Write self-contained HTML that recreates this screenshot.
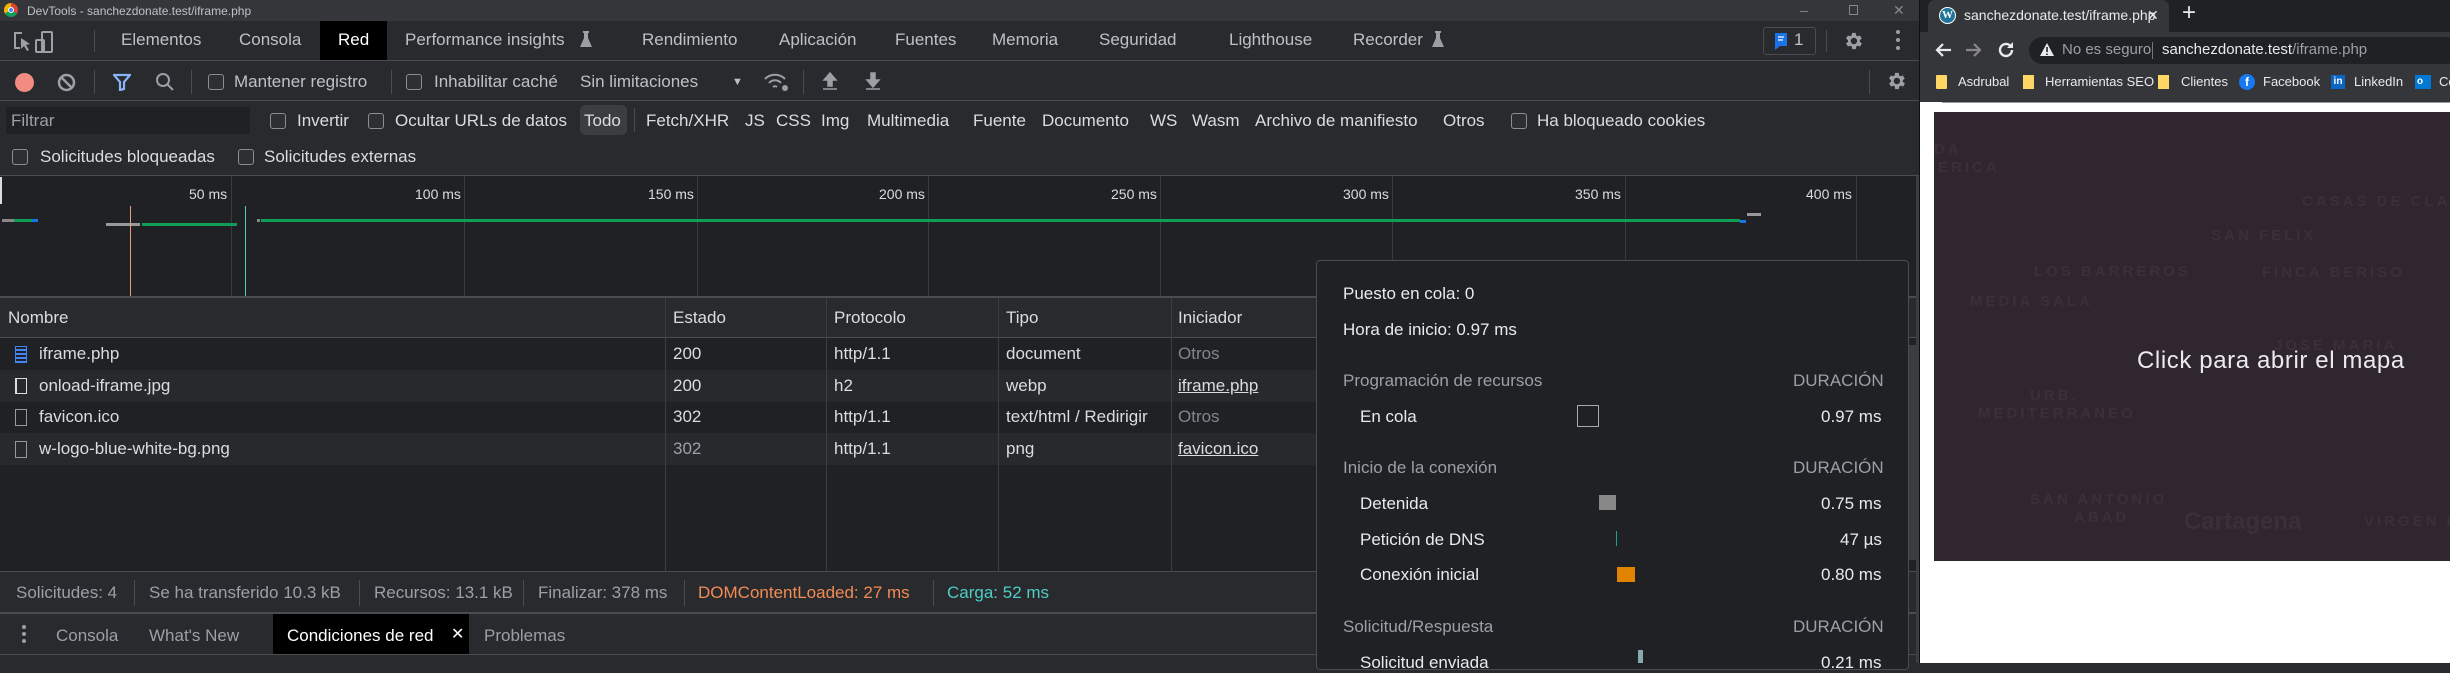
<!DOCTYPE html>
<html><head><meta charset="utf-8"><style>
*{margin:0;padding:0;box-sizing:border-box}
body{width:2450px;height:663px;overflow:hidden;background:#292a2d;font-family:"Liberation Sans",sans-serif;font-size:17px;color:#bdc1c6;position:relative}
.a{position:absolute;white-space:nowrap}
.hl{position:absolute;height:1px;background:#4a4c50}
.vl{position:absolute;width:1px;background:#4a4c50}
.cb{position:absolute;width:16px;height:16px;border:1.5px solid #8a8d91;border-radius:3px;background:#2e2f33}
.t{position:absolute;white-space:nowrap;line-height:20px}
</style></head><body>
<!-- title bar -->
<div class="a" style="left:0;top:0;width:1919px;height:21px;background:#35363a"></div>
<div class="a" style="left:4px;top:3px;width:14px;height:14px;border-radius:50%;background:conic-gradient(#db4437 0 120deg,#0f9d58 120deg 240deg,#f4b400 240deg);"></div>
<div class="a" style="left:8px;top:7px;width:6px;height:6px;border-radius:50%;background:#4285f4;border:1px solid #fff"></div>
<div class="t" style="left:27px;top:1px;font-size:12px;color:#bdc1c6">DevTools - sanchezdonate.test/iframe.php</div>
<div class="t" style="left:1800px;top:0px;font-size:14px;color:#888">–</div>
<div class="a" style="left:1849px;top:5px;width:9px;height:10px;border:1px solid #888"></div>
<div class="t" style="left:1893px;top:0px;font-size:14px;color:#888">✕</div>
<!-- tab bar -->
<div class="hl" style="left:0;top:60px;width:1919px"></div>
<svg class="a" style="left:12px;top:30px" width="42" height="24" viewBox="0 0 42 24" fill="none" stroke="#9aa0a6" stroke-width="2"><path d="M10 3H3v15h5"/><path d="M9 8l9 6-4 1 3 5-2 1-3-5-3 3z" fill="#9aa0a6" stroke="none"/><rect x="30" y="2" width="10" height="20" rx="1"/><rect x="24" y="10" width="8" height="12" rx="1"/></svg>
<div class="vl" style="left:94px;top:30px;height:22px"></div>
<div class="t" style="left:121px;top:30px">Elementos</div>
<div class="t" style="left:239px;top:30px">Consola</div>
<div class="a" style="left:320px;top:21px;width:67px;height:39px;background:#000"></div>
<div class="t" style="left:338px;top:30px;color:#fff">Red</div>
<div class="t" style="left:405px;top:30px">Performance insights</div>
<svg class="a" style="left:580px;top:31px" width="12" height="16"><path d="M3 0h6v2H8v5l4 9H0l4-9V2H3z" fill="#9aa0a6"/></svg>
<div class="t" style="left:642px;top:30px">Rendimiento</div>
<div class="t" style="left:779px;top:30px">Aplicación</div>
<div class="t" style="left:895px;top:30px">Fuentes</div>
<div class="t" style="left:992px;top:30px">Memoria</div>
<div class="t" style="left:1099px;top:30px">Seguridad</div>
<div class="t" style="left:1229px;top:30px">Lighthouse</div>
<div class="t" style="left:1353px;top:30px">Recorder</div>
<svg class="a" style="left:1432px;top:31px" width="12" height="16"><path d="M3 0h6v2H8v5l4 9H0l4-9V2H3z" fill="#9aa0a6"/></svg>
<div class="a" style="left:1763px;top:27px;width:53px;height:28px;border:1px solid #4a4c50;border-radius:3px"></div>
<svg class="a" style="left:1775px;top:33px" width="14" height="18"><path d="M0 0h12v13H5l-5 4z" fill="#1a73e8"/><path d="M3 4h6M3 7h5" stroke="#fff" stroke-width="1.3"/></svg>
<div class="t" style="left:1794px;top:30px;color:#bdc1c6">1</div>
<div class="vl" style="left:1826px;top:30px;height:22px"></div>
<svg class="a" style="left:1842px;top:30px" width="22" height="22" viewBox="0 0 24 24"><path fill="#9aa0a6" d="M19.4 13a7.5 7.5 0 0 0 0-2l2.1-1.6-2-3.5-2.5 1a7.3 7.3 0 0 0-1.7-1L15 3.2h-4l-.4 2.7a7.3 7.3 0 0 0-1.7 1l-2.5-1-2 3.5L6.6 11a7.5 7.5 0 0 0 0 2l-2.1 1.6 2 3.5 2.5-1a7.3 7.3 0 0 0 1.7 1l.4 2.7h4l.4-2.7a7.3 7.3 0 0 0 1.7-1l2.5 1 2-3.5zM13 15.5a3.5 3.5 0 1 1 0-7 3.5 3.5 0 0 1 0 7z"/></svg>
<div class="a" style="left:1896px;top:30px;width:4px;height:4px;border-radius:50%;background:#9aa0a6;box-shadow:0 8px 0 #9aa0a6,0 16px 0 #9aa0a6"></div>
<!-- toolbar -->
<div class="hl" style="left:0;top:100px;width:1919px"></div>
<div class="a" style="left:15px;top:73px;width:19px;height:19px;border-radius:50%;background:#f28b82"></div>
<svg class="a" style="left:57px;top:73px" width="19" height="19"><circle cx="9.5" cy="9.5" r="7.5" fill="none" stroke="#9aa0a6" stroke-width="2.5"/><path d="M4 4l11 11" stroke="#9aa0a6" stroke-width="2.5"/></svg>
<div class="vl" style="left:94px;top:70px;height:24px"></div>
<svg class="a" style="left:113px;top:73px" width="18" height="18"><path d="M1 2h16l-6 7v7l-4 1V9z" fill="none" stroke="#8ab4f8" stroke-width="2.2"/></svg>
<svg class="a" style="left:155px;top:72px" width="20" height="20"><circle cx="8" cy="8" r="6" fill="none" stroke="#9aa0a6" stroke-width="2"/><path d="M12 12l6 6" stroke="#9aa0a6" stroke-width="2"/></svg>
<div class="vl" style="left:191px;top:70px;height:24px"></div>
<div class="cb" style="left:208px;top:74px"></div>
<div class="t" style="left:234px;top:72px">Mantener registro</div>
<div class="vl" style="left:391px;top:70px;height:24px"></div>
<div class="cb" style="left:406px;top:74px"></div>
<div class="t" style="left:434px;top:72px">Inhabilitar caché</div>
<div class="t" style="left:580px;top:72px">Sin limitaciones</div>
<div class="t" style="left:732px;top:72px;font-size:11px">▼</div>
<svg class="a" style="left:763px;top:71px" width="28" height="22"><path d="M2 8a14 14 0 0 1 20 0M6 12a8 8 0 0 1 12 0M10 16a3 3 0 0 1 4 0" stroke="#9aa0a6" stroke-width="2" fill="none"/><circle cx="22" cy="17" r="3" fill="#9aa0a6"/></svg>
<div class="vl" style="left:803px;top:70px;height:24px"></div>
<svg class="a" style="left:822px;top:71px" width="16" height="20"><path d="M8 2L2 9h4v6h4V9h4z M1 18h14" fill="#9aa0a6" stroke="#9aa0a6" stroke-width="1.5"/></svg>
<svg class="a" style="left:865px;top:71px" width="16" height="20"><path d="M8 16l-6-7h4V2h4v7h4z M1 18h14" fill="#9aa0a6" stroke="#9aa0a6" stroke-width="1.5"/></svg>
<div class="vl" style="left:1869px;top:70px;height:24px"></div>
<svg class="a" style="left:1885px;top:70px" width="22" height="22" viewBox="0 0 24 24"><path fill="#9aa0a6" d="M19.4 13a7.5 7.5 0 0 0 0-2l2.1-1.6-2-3.5-2.5 1a7.3 7.3 0 0 0-1.7-1L15 3.2h-4l-.4 2.7a7.3 7.3 0 0 0-1.7 1l-2.5-1-2 3.5L6.6 11a7.5 7.5 0 0 0 0 2l-2.1 1.6 2 3.5 2.5-1a7.3 7.3 0 0 0 1.7 1l.4 2.7h4l.4-2.7a7.3 7.3 0 0 0 1.7-1l2.5 1 2-3.5zM13 15.5a3.5 3.5 0 1 1 0-7 3.5 3.5 0 0 1 0 7z"/></svg>
<!-- filter row -->
<div class="a" style="left:6px;top:107px;width:244px;height:27px;background:#202124"></div>
<div class="t" style="left:11px;top:111px;color:#9aa0a6">Filtrar</div>
<div class="cb" style="left:270px;top:113px"></div><div class="t" style="left:297px;top:111px;color:#dadce0">Invertir</div>
<div class="cb" style="left:368px;top:113px"></div><div class="t" style="left:395px;top:111px;color:#dadce0">Ocultar URLs de datos</div>
<div class="a" style="left:580px;top:105px;width:47px;height:30px;background:#3c3d41;border-radius:5px"></div>
<div class="t" style="left:584px;top:111px;color:#dadce0">Todo</div>
<div class="vl" style="left:634px;top:108px;height:24px"></div>
<div class="t" style="left:646px;top:111px;color:#dadce0">Fetch/XHR</div>
<div class="t" style="left:745px;top:111px;color:#dadce0">JS</div>
<div class="t" style="left:776px;top:111px;color:#dadce0">CSS</div>
<div class="t" style="left:821px;top:111px;color:#dadce0">Img</div>
<div class="t" style="left:867px;top:111px;color:#dadce0">Multimedia</div>
<div class="t" style="left:973px;top:111px;color:#dadce0">Fuente</div>
<div class="t" style="left:1042px;top:111px;color:#dadce0">Documento</div>
<div class="t" style="left:1150px;top:111px;color:#dadce0">WS</div>
<div class="t" style="left:1192px;top:111px;color:#dadce0">Wasm</div>
<div class="t" style="left:1255px;top:111px;color:#dadce0">Archivo de manifiesto</div>
<div class="t" style="left:1443px;top:111px;color:#dadce0">Otros</div>
<div class="cb" style="left:1511px;top:113px"></div><div class="t" style="left:1537px;top:111px;color:#dadce0">Ha bloqueado cookies</div>
<div class="cb" style="left:12px;top:149px"></div><div class="t" style="left:40px;top:147px;color:#dadce0">Solicitudes bloqueadas</div>
<div class="cb" style="left:238px;top:149px"></div><div class="t" style="left:264px;top:147px;color:#dadce0">Solicitudes externas</div>
<div class="hl" style="left:0;top:175px;width:1919px"></div>
<!-- timeline -->
<div class="a" style="left:0;top:176px;width:1916px;height:121px;background:#202124"></div>
<div class="a" style="left:0;top:177px;width:2px;height:27px;background:#ddd"></div>
<div class="vl" style="left:231px;top:176px;height:121px;background:#3a3b3f"></div>
<div class="vl" style="left:464px;top:176px;height:121px;background:#3a3b3f"></div>
<div class="vl" style="left:697px;top:176px;height:121px;background:#3a3b3f"></div>
<div class="vl" style="left:928px;top:176px;height:121px;background:#3a3b3f"></div>
<div class="vl" style="left:1160px;top:176px;height:121px;background:#3a3b3f"></div>
<div class="vl" style="left:1392px;top:176px;height:121px;background:#3a3b3f"></div>
<div class="vl" style="left:1625px;top:176px;height:121px;background:#3a3b3f"></div>
<div class="vl" style="left:1856px;top:176px;height:121px;background:#3a3b3f"></div>
<div class="t" style="left:189px;top:184px;font-size:14px;color:#dadce0">50 ms</div>
<div class="t" style="left:415px;top:184px;font-size:14px;color:#dadce0">100 ms</div>
<div class="t" style="left:648px;top:184px;font-size:14px;color:#dadce0">150 ms</div>
<div class="t" style="left:879px;top:184px;font-size:14px;color:#dadce0">200 ms</div>
<div class="t" style="left:1111px;top:184px;font-size:14px;color:#dadce0">250 ms</div>
<div class="t" style="left:1343px;top:184px;font-size:14px;color:#dadce0">300 ms</div>
<div class="t" style="left:1575px;top:184px;font-size:14px;color:#dadce0">350 ms</div>
<div class="t" style="left:1806px;top:184px;font-size:14px;color:#dadce0">400 ms</div>
<div class="a" style="left:2px;top:219px;width:12px;height:3px;background:#888"></div>
<div class="a" style="left:14px;top:219px;width:18px;height:3px;background:#0f9d58"></div>
<div class="a" style="left:32px;top:219px;width:6px;height:3px;background:#1a73e8"></div>
<div class="a" style="left:106px;top:223px;width:34px;height:3px;background:#999"></div>
<div class="a" style="left:142px;top:223px;width:95px;height:3px;background:#0f9d58"></div>
<div class="a" style="left:257px;top:219px;width:3px;height:3px;background:#888"></div>
<div class="a" style="left:261px;top:219px;width:1479px;height:3px;background:#0f9d58"></div>
<div class="a" style="left:1740px;top:220px;width:6px;height:3px;background:#1a73e8"></div>
<div class="a" style="left:1747px;top:213px;width:14px;height:3px;background:#999"></div>
<div class="a" style="left:130px;top:206px;width:1px;height:91px;background:#e8a07a"></div>
<div class="a" style="left:245px;top:206px;width:1px;height:91px;background:#4ecdc4"></div>
<div class="hl" style="left:0;top:296px;width:1916px;height:2px;background:#4a4c50"></div>
<!-- table -->
<div class="a" style="left:0;top:298px;width:1916px;height:40px;background:#292a2d"></div>
<div class="hl" style="left:0;top:337px;width:1916px"></div>
<div class="a" style="left:0;top:338px;width:1916px;height:233px;background:#202124"></div>
<div class="a" style="left:0;top:370px;width:1916px;height:32px;background:#28292c"></div>
<div class="a" style="left:0;top:433px;width:1916px;height:32px;background:#28292c"></div>
<div class="vl" style="left:665px;top:298px;height:273px;background:#3c3d41"></div>
<div class="vl" style="left:826px;top:298px;height:273px;background:#3c3d41"></div>
<div class="vl" style="left:998px;top:298px;height:273px;background:#3c3d41"></div>
<div class="vl" style="left:1171px;top:298px;height:273px;background:#3c3d41"></div>
<div class="t" style="left:8px;top:308px;color:#dadce0">Nombre</div>
<div class="t" style="left:673px;top:308px;color:#dadce0">Estado</div>
<div class="t" style="left:834px;top:308px;color:#dadce0">Protocolo</div>
<div class="t" style="left:1006px;top:308px;color:#dadce0">Tipo</div>
<div class="t" style="left:1178px;top:308px;color:#dadce0">Iniciador</div>
<div class="a" style="left:15px;top:346px;width:12px;height:17px;border:1.5px solid #4285f4;background:repeating-linear-gradient(#202124 0 2px,#4285f4 2px 4px)"></div>
<div class="a" style="left:15px;top:378px;width:12px;height:16px;border:1.5px solid #ddd;border-left-width:2px"></div>
<div class="a" style="left:15px;top:409px;width:12px;height:17px;border:1.5px solid #999"></div>
<div class="a" style="left:15px;top:441px;width:12px;height:17px;border:1.5px solid #999"></div>
<div class="t" style="left:39px;top:344px;color:#dadce0">iframe.php</div>
<div class="t" style="left:39px;top:376px;color:#dadce0">onload-iframe.jpg</div>
<div class="t" style="left:39px;top:407px;color:#dadce0">favicon.ico</div>
<div class="t" style="left:39px;top:439px;color:#dadce0">w-logo-blue-white-bg.png</div>
<div class="t" style="left:673px;top:344px;color:#dadce0">200</div>
<div class="t" style="left:673px;top:376px;color:#dadce0">200</div>
<div class="t" style="left:673px;top:407px;color:#dadce0">302</div>
<div class="t" style="left:673px;top:439px;color:#9aa0a6">302</div>
<div class="t" style="left:834px;top:344px;color:#dadce0">http/1.1</div>
<div class="t" style="left:834px;top:376px;color:#dadce0">h2</div>
<div class="t" style="left:834px;top:407px;color:#dadce0">http/1.1</div>
<div class="t" style="left:834px;top:439px;color:#dadce0">http/1.1</div>
<div class="t" style="left:1006px;top:344px;color:#dadce0">document</div>
<div class="t" style="left:1006px;top:376px;color:#dadce0">webp</div>
<div class="t" style="left:1006px;top:407px;color:#dadce0">text/html / Redirigir</div>
<div class="t" style="left:1006px;top:439px;color:#dadce0">png</div>
<div class="t" style="left:1178px;top:344px;color:#80868b">Otros</div>
<div class="t" style="left:1178px;top:376px;color:#dadce0;text-decoration:underline">iframe.php</div>
<div class="t" style="left:1178px;top:407px;color:#80868b">Otros</div>
<div class="t" style="left:1178px;top:439px;color:#dadce0;text-decoration:underline">favicon.ico</div>
<div class="a" style="left:1909px;top:345px;width:7px;height:215px;background:#3c3d41"></div>
<!-- status -->
<div class="hl" style="left:0;top:571px;width:1919px"></div>
<div class="t" style="left:16px;top:583px;color:#9aa0a6">Solicitudes: 4</div>
<div class="vl" style="left:134px;top:580px;height:26px"></div>
<div class="t" style="left:149px;top:583px;color:#9aa0a6">Se ha transferido 10.3 kB</div>
<div class="vl" style="left:359px;top:580px;height:26px"></div>
<div class="t" style="left:374px;top:583px;color:#9aa0a6">Recursos: 13.1 kB</div>
<div class="vl" style="left:523px;top:580px;height:26px"></div>
<div class="t" style="left:538px;top:583px;color:#9aa0a6">Finalizar: 378 ms</div>
<div class="vl" style="left:684px;top:580px;height:26px"></div>
<div class="t" style="left:698px;top:583px;color:#f28b54">DOMContentLoaded: 27 ms</div>
<div class="vl" style="left:933px;top:580px;height:26px"></div>
<div class="t" style="left:947px;top:583px;color:#4ecdc4">Carga: 52 ms</div>
<div class="hl" style="left:0;top:612px;width:1919px;height:2px"></div>
<div class="a" style="left:22px;top:625px;width:4px;height:4px;border-radius:50%;background:#9aa0a6;box-shadow:0 7px 0 #9aa0a6,0 14px 0 #9aa0a6"></div>
<div class="t" style="left:56px;top:626px;color:#9aa0a6">Consola</div>
<div class="t" style="left:149px;top:626px;color:#9aa0a6">What's New</div>
<div class="a" style="left:273px;top:614px;width:196px;height:40px;background:#000"></div>
<div class="t" style="left:287px;top:626px;color:#fff">Condiciones de red</div>
<div class="t" style="left:451px;top:625px;color:#fff;font-size:16px">✕</div>
<div class="t" style="left:484px;top:626px;color:#9aa0a6">Problemas</div>
<div class="hl" style="left:0;top:654px;width:1919px"></div>
<!-- popup -->
<div class="a" style="left:1316px;top:260px;width:593px;height:410px;background:#202124;border:1px solid #4a4c50;border-radius:4px"></div>
<div class="t" style="left:1343px;top:284px;color:#e8eaed">Puesto en cola: 0</div>
<div class="t" style="left:1343px;top:320px;color:#e8eaed">Hora de inicio: 0.97 ms</div>
<div class="t" style="left:1343px;top:371px;color:#9aa0a6">Programación de recursos</div>
<div class="t" style="left:1793px;top:371px;color:#9aa0a6">DURACIÓN</div>
<div class="t" style="left:1360px;top:407px;color:#e8eaed">En cola</div>
<div class="a" style="left:1577px;top:405px;width:22px;height:22px;border:1px solid #aaa"></div>
<div class="t" style="left:1821px;top:407px;color:#e8eaed">0.97 ms</div>
<div class="t" style="left:1343px;top:458px;color:#9aa0a6">Inicio de la conexión</div>
<div class="t" style="left:1793px;top:458px;color:#9aa0a6">DURACIÓN</div>
<div class="t" style="left:1360px;top:494px;color:#e8eaed">Detenida</div>
<div class="a" style="left:1599px;top:495px;width:17px;height:15px;background:#888"></div>
<div class="t" style="left:1821px;top:494px;color:#e8eaed">0.75 ms</div>
<div class="t" style="left:1360px;top:530px;color:#e8eaed">Petición de DNS</div>
<div class="a" style="left:1616px;top:531px;width:1px;height:15px;background:#1aa190"></div>
<div class="t" style="left:1840px;top:530px;color:#e8eaed">47 µs</div>
<div class="t" style="left:1360px;top:565px;color:#e8eaed">Conexión inicial</div>
<div class="a" style="left:1617px;top:567px;width:18px;height:15px;background:#e08400"></div>
<div class="t" style="left:1821px;top:565px;color:#e8eaed">0.80 ms</div>
<div class="t" style="left:1343px;top:617px;color:#9aa0a6">Solicitud/Respuesta</div>
<div class="t" style="left:1793px;top:617px;color:#9aa0a6">DURACIÓN</div>
<div class="t" style="left:1360px;top:653px;color:#e8eaed">Solicitud enviada</div>
<div class="a" style="left:1638px;top:650px;width:5px;height:13px;background:#8aa"></div>
<div class="t" style="left:1821px;top:653px;color:#e8eaed">0.21 ms</div>
<div class="a" style="left:1916px;top:176px;width:3px;height:487px;background:#3c3d41"></div>
<!-- browser -->
<div class="a" style="left:1919px;top:0;width:531px;height:663px;background:#fff"></div>
<div class="a" style="left:1919px;top:0;width:531px;height:32px;background:#202124"></div>
<div class="a" style="left:1928px;top:0;width:241px;height:33px;background:#35363a;border-radius:7px 7px 0 0"></div>
<div class="a" style="left:1939px;top:7px;width:17px;height:17px;border-radius:50%;background:#21759b;border:1.5px solid #fff;color:#fff;font-size:11px;line-height:14px;text-align:center;font-family:'Liberation Serif',serif;font-weight:bold">W</div>
<div class="t" style="left:1964px;top:5px;font-size:14px;color:#e8eaed">sanchezdonate.test/iframe.php</div>
<div class="t" style="left:2147px;top:5px;font-size:14px;color:#e8eaed">✕</div>
<div class="t" style="left:2182px;top:3px;font-size:24px;color:#e8eaed">+</div>
<div class="a" style="left:1919px;top:32px;width:531px;height:70px;background:#35363a"></div>
<svg class="a" style="left:1934px;top:42px" width="18" height="16"><path d="M17 8H3M9 2L3 8l6 6" stroke="#e8eaed" stroke-width="2.2" fill="none"/></svg>
<svg class="a" style="left:1965px;top:42px" width="18" height="16"><path d="M1 8h14M9 2l6 6-6 6" stroke="#888" stroke-width="2.2" fill="none"/></svg>
<svg class="a" style="left:1997px;top:41px" width="18" height="18"><path d="M15 9a6 6 0 1 1-2-4.5" stroke="#e8eaed" stroke-width="2.4" fill="none"/><path d="M16 1v6h-6z" fill="#e8eaed"/></svg>
<div class="a" style="left:2029px;top:37px;width:430px;height:27px;background:#202124;border-radius:14px"></div>
<svg class="a" style="left:2039px;top:42px" width="16" height="15"><path d="M8 1L15 14H1z" fill="#e8eaed"/><path d="M8 5v5M8 11.5v1.5" stroke="#202124" stroke-width="1.6"/></svg>
<div class="t" style="left:2062px;top:40px;font-size:15px;color:#9aa0a6">No es seguro</div>
<div class="vl" style="left:2152px;top:42px;height:17px;background:#777"></div>
<div class="t" style="left:2162px;top:40px;font-size:15px;color:#e8eaed">sanchezdonate.test<span style="color:#9aa0a6">/iframe.php</span></div>
<div class="a" style="left:1936px;top:75px;width:11px;height:14px;background:#fdd663;border-radius:1px"></div>
<div class="t" style="left:1958px;top:72px;font-size:13px;color:#e8eaed">Asdrubal</div>
<div class="a" style="left:2023px;top:75px;width:11px;height:14px;background:#fdd663"></div>
<div class="t" style="left:2045px;top:72px;font-size:13px;color:#e8eaed">Herramientas SEO</div>
<div class="a" style="left:2158px;top:75px;width:11px;height:14px;background:#fdd663"></div>
<div class="t" style="left:2181px;top:72px;font-size:13px;color:#e8eaed">Clientes</div>
<div class="a" style="left:2239px;top:74px;width:16px;height:16px;border-radius:50%;background:#1877f2;color:#fff;font-size:12px;font-weight:bold;text-align:center;line-height:17px">f</div>
<div class="t" style="left:2263px;top:72px;font-size:13px;color:#e8eaed">Facebook</div>
<div class="a" style="left:2331px;top:75px;width:14px;height:14px;background:#0a66c2;color:#fff;font-size:10px;font-weight:bold;text-align:center;line-height:14px">in</div>
<div class="t" style="left:2354px;top:72px;font-size:13px;color:#e8eaed">LinkedIn</div>
<div class="a" style="left:2415px;top:75px;width:16px;height:14px;background:#0078d4;color:#fff;font-size:10px;font-weight:bold;line-height:14px;padding-left:2px">o</div>
<div class="t" style="left:2439px;top:72px;font-size:13px;color:#e8eaed">Co</div>
<div class="a" style="left:1942px;top:102px;width:508px;height:1px;background:#999"></div>
<div class="a" style="left:1934px;top:112px;width:516px;height:449px;background:#2f2630;overflow:hidden">
<div class="t" style="left:0px;top:28px;font-size:15px;color:#3b3038;letter-spacing:3px;font-weight:bold">DA</div>
<div class="t" style="left:4px;top:46px;font-size:15px;color:#3b3038;letter-spacing:3px;font-weight:bold">ERICA</div>
<div class="t" style="left:368px;top:80px;font-size:15px;color:#3b3038;letter-spacing:3px;font-weight:bold">CASAS DE CLARES</div>
<div class="t" style="left:277px;top:114px;font-size:15px;color:#3b3038;letter-spacing:3px;font-weight:bold">SAN FELIX</div>
<div class="t" style="left:100px;top:150px;font-size:15px;color:#3b3038;letter-spacing:3px;font-weight:bold">LOS BARREROS</div>
<div class="t" style="left:328px;top:151px;font-size:15px;color:#3b3038;letter-spacing:3px;font-weight:bold">FINCA BERISO</div>
<div class="t" style="left:36px;top:180px;font-size:15px;color:#3b3038;letter-spacing:3px;font-weight:bold">MEDIA SALA</div>
<div class="t" style="left:340px;top:224px;font-size:15px;color:#3b3038;letter-spacing:3px;font-weight:bold">JOSE MARIA</div>
<div class="t" style="left:96px;top:274px;font-size:15px;color:#3b3038;letter-spacing:3px;font-weight:bold">URB.</div>
<div class="t" style="left:44px;top:292px;font-size:15px;color:#3b3038;letter-spacing:3px;font-weight:bold">MEDITERRANEO</div>
<div class="t" style="left:96px;top:378px;font-size:15px;color:#3b3038;letter-spacing:3px;font-weight:bold">SAN ANTONIO</div>
<div class="t" style="left:140px;top:396px;font-size:15px;color:#3b3038;letter-spacing:3px;font-weight:bold">ABAD</div>
<div class="t" style="left:250px;top:396px;font-size:24px;line-height:28px;color:#3b3038;font-weight:bold">Cartagena</div>
<div class="t" style="left:430px;top:400px;font-size:15px;color:#3b3038;letter-spacing:3px;font-weight:bold">VIRGEN DE</div>
</div>
<div class="t" style="left:2137px;top:346px;font-size:24px;line-height:30px;color:#ecebec;letter-spacing:0.6px">Click para abrir el mapa</div>
<div class="a" style="left:1919px;top:0;width:1px;height:663px;background:#111"></div>
</body></html>
